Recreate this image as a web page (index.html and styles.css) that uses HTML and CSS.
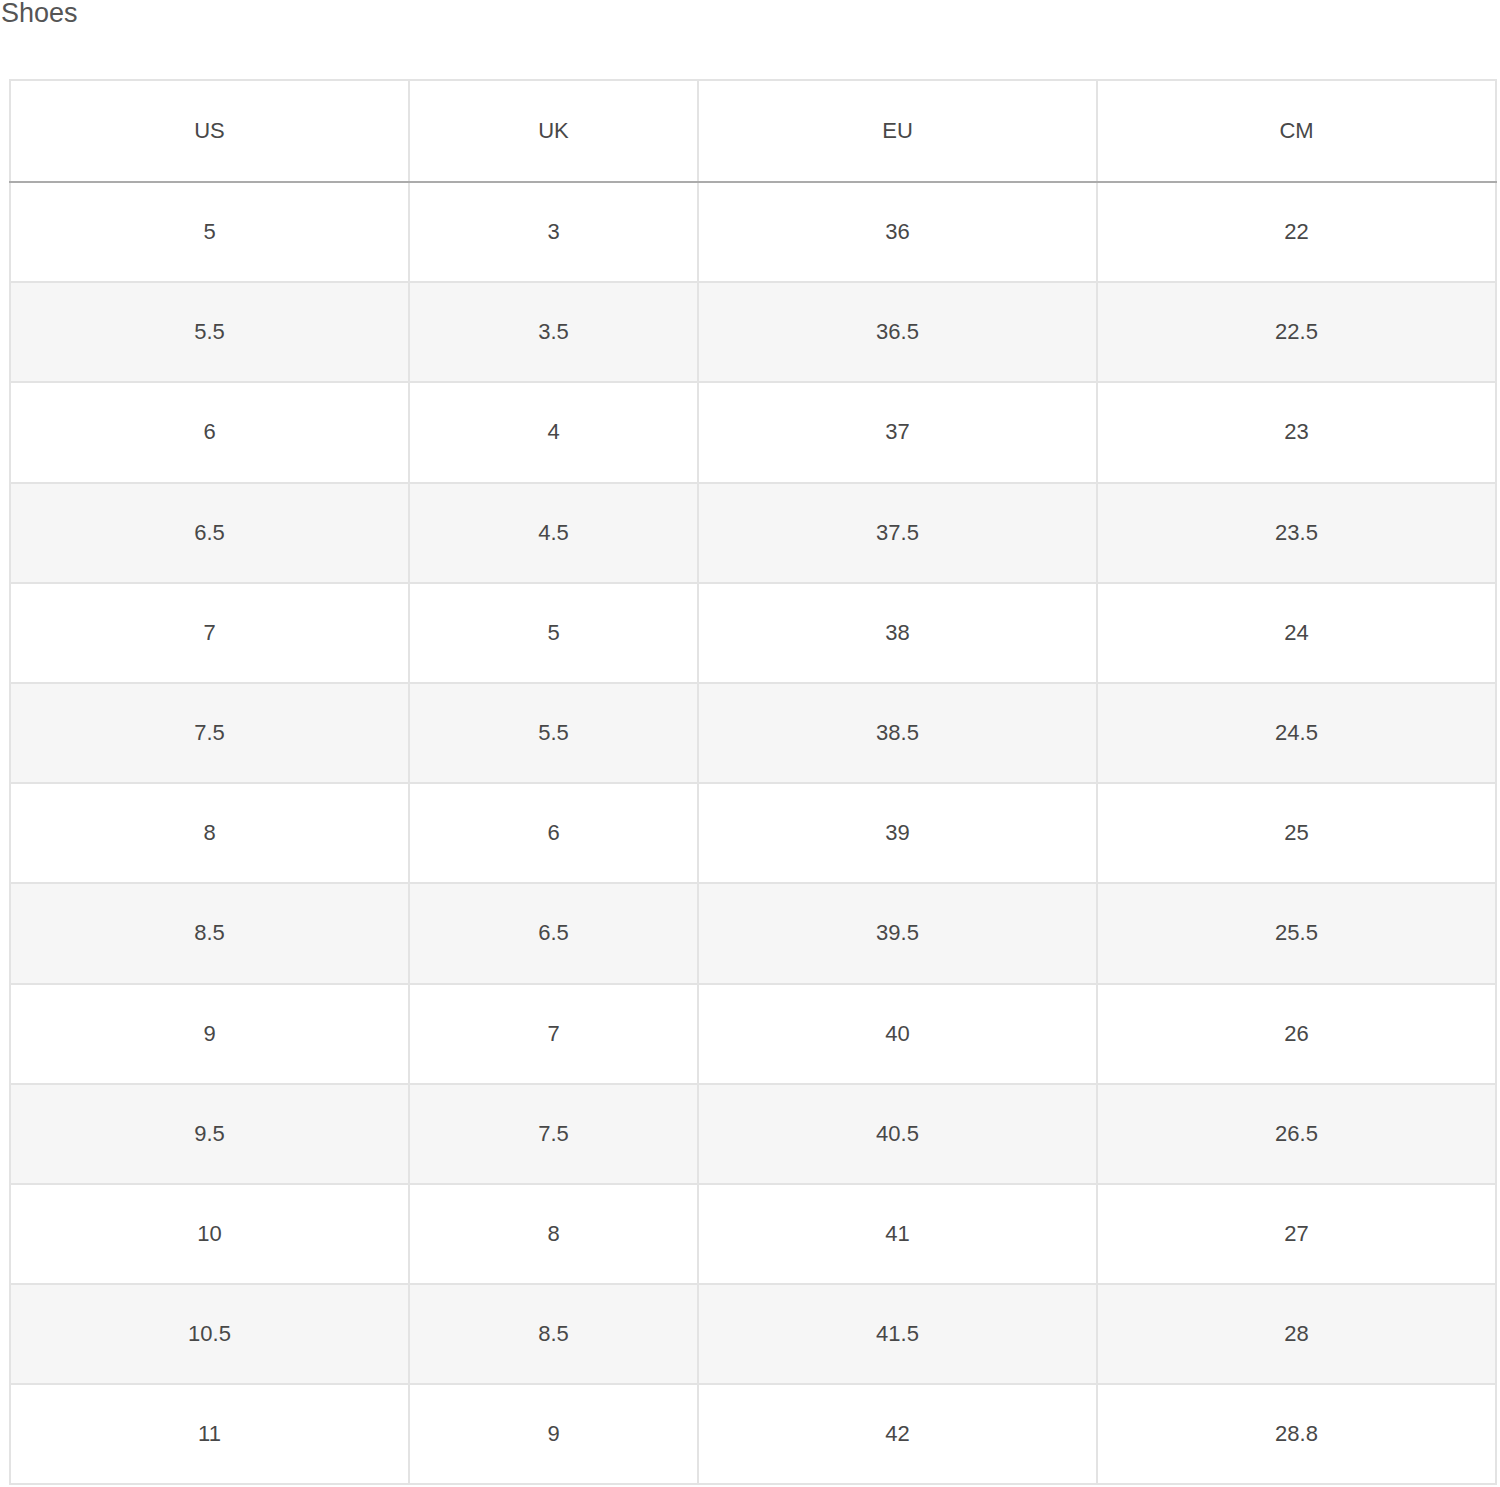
FILE: index.html
```html
<!DOCTYPE html>
<html>
<head>
<meta charset="utf-8">
<link rel="stylesheet" href="styles.css">
</head>
<body>
<h1 class="title">Shoes</h1>
<table class="size-table">
  <colgroup>
    <col class="c-wide"><col class="c-narrow"><col class="c-wide"><col class="c-wide">
  </colgroup>
  <thead>
    <tr><th>US</th><th>UK</th><th>EU</th><th>CM</th></tr>
  </thead>
  <tbody>
    <tr><td>5</td><td>3</td><td>36</td><td>22</td></tr>
    <tr><td>5.5</td><td>3.5</td><td>36.5</td><td>22.5</td></tr>
    <tr><td>6</td><td>4</td><td>37</td><td>23</td></tr>
    <tr><td>6.5</td><td>4.5</td><td>37.5</td><td>23.5</td></tr>
    <tr><td>7</td><td>5</td><td>38</td><td>24</td></tr>
    <tr><td>7.5</td><td>5.5</td><td>38.5</td><td>24.5</td></tr>
    <tr><td>8</td><td>6</td><td>39</td><td>25</td></tr>
    <tr><td>8.5</td><td>6.5</td><td>39.5</td><td>25.5</td></tr>
    <tr><td>9</td><td>7</td><td>40</td><td>26</td></tr>
    <tr><td>9.5</td><td>7.5</td><td>40.5</td><td>26.5</td></tr>
    <tr><td>10</td><td>8</td><td>41</td><td>27</td></tr>
    <tr><td>10.5</td><td>8.5</td><td>41.5</td><td>28</td></tr>
    <tr><td>11</td><td>9</td><td>42</td><td>28.8</td></tr>
  </tbody>
</table>
</body>
</html>
```

FILE: styles.css
```css
html, body {
  margin: 0;
  padding: 0;
  background: #fff;
}
body {
  font-family: "Liberation Sans", Arial, Helvetica, sans-serif;
  color: #4a4a4a;
}
.title {
  margin: 0 0 53px 1px;
  font-size: 27px;
  font-weight: normal;
  line-height: 26px;
  color: #555;
}
.size-table {
  margin-left: 9px;
  width: 1486px;
  border-collapse: collapse;
  table-layout: fixed;
  border: 2px solid #e3e3e3;
}
.c-wide { width: 399px; }
.c-narrow { width: 289px; }
.size-table th,
.size-table td {
  border: 2px solid #e3e3e3;
  text-align: center;
  vertical-align: middle;
  font-size: 22px;
  font-weight: normal;
  padding: 0;
  color: #484848;
}
.size-table thead tr { height: 102px; }
.size-table th { border-bottom: 2px solid #ababab; }
.size-table tbody tr { height: 100.2px; }
.size-table tbody tr:nth-child(even) td { background: #f6f6f6; }
```
